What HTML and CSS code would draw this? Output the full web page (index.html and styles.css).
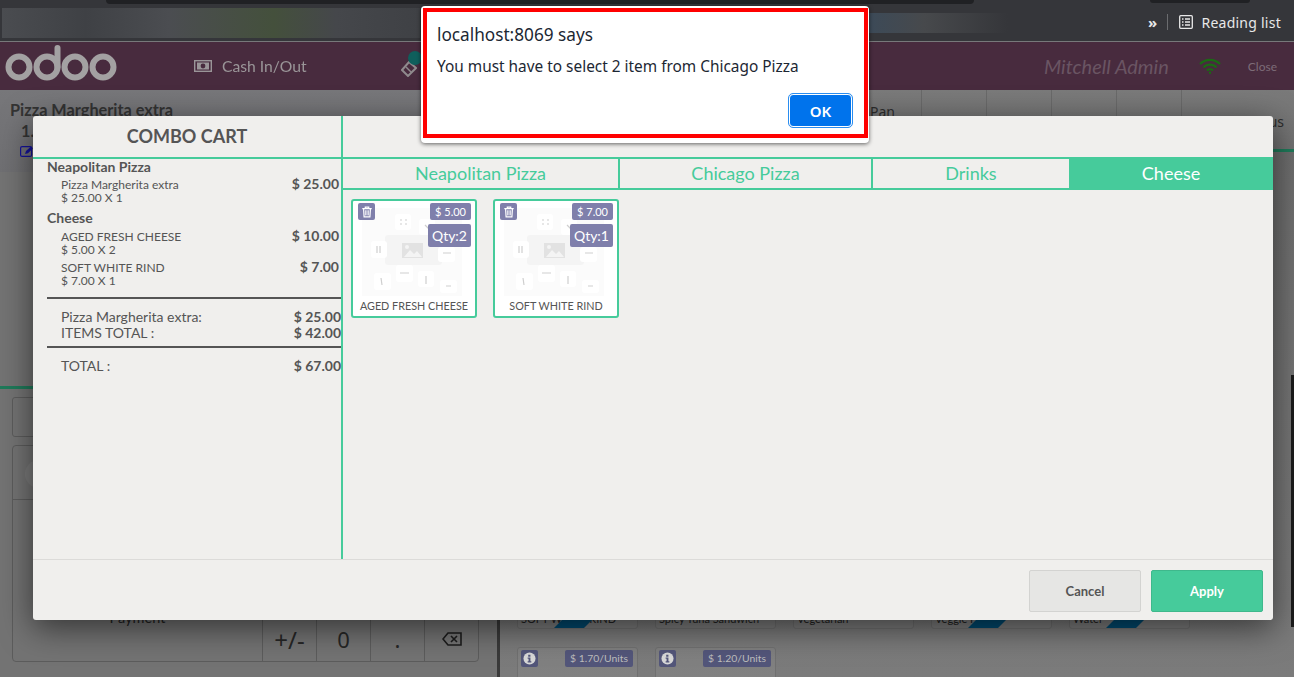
FILE: index.html
```html
<!DOCTYPE html>
<html lang="en">
<head>
    <meta charset="UTF-8">
    <title>Combo Cart</title>
    <link rel="stylesheet" href="styles.css">
</head>
<body>
<svg class="defs" width="0" height="0">
    <symbol id="placeholder" viewBox="0 0 100 88">
        <rect width="100" height="88" fill="#fbfbfb"/>
        <rect x="23" y="27" width="57" height="30" rx="3" fill="#f4f4f4"/>
        <path d="M40 35h21v15H40z" fill="#e2e2e2"/>
        <path d="M42 49l6-7 4 4 3-3 5 6z" fill="#f4f4f4"/>
        <circle cx="45" cy="39" r="2" fill="#f4f4f4"/>
        <rect x="33" y="6" width="16" height="16" rx="3" fill="#fff"/>
        <rect x="9" y="33" width="16" height="17" rx="3" fill="#fff"/>
        <rect x="57" y="11" width="16" height="16" rx="3" fill="#fff"/>
        <rect x="76" y="39" width="17" height="15" rx="3" fill="#fff"/>
        <rect x="34" y="57" width="17" height="17" rx="3" fill="#fff"/>
        <rect x="12" y="65" width="17" height="17" rx="3" fill="#fff"/>
        <rect x="56" y="63" width="16" height="16" rx="3" fill="#fff"/>
        <rect x="78" y="72" width="17" height="13" rx="3" fill="#fff"/>
        <path d="M38 12h2M43 12h2M38 16h2M43 16h2M15 38v7M18 38v7M38 65h9M19 70l1 7M64 68v8M84 78h5M81 45h8M63 17l4 4" stroke="#cfcfcf" stroke-width="1.200"/>
    </symbol>
    <symbol id="trash" viewBox="0 0 14 14">
        <path d="M1.500 3h11M5 3V1.400h4V3M3 3l.6 9.600h6.800L11 3" fill="none" stroke="#fff" stroke-width="1.400"/>
        <path d="M5.400 5v6M7 5v6M8.600 5v6" stroke="#fff" stroke-width="1"/>
    </symbol>
    <symbol id="info" viewBox="0 0 14 14">
        <circle cx="7" cy="7" r="6.500" fill="#d8d8d8"/>
        <path d="M5.600 3h2.400v2H5.600zM5 6h3v4h1v1.400H5V10h1V7.400H5z" fill="#53567a"/>
    </symbol>
</svg>

<div class="page">
    <!-- browser bar -->
    <div class="chrome">
        <div class="tab-strip"></div>
        <div class="tab-strip-right"></div>
        <div class="blur-left"></div>
        <div class="blur-right"></div>
        <div class="chrome-right">
            <span class="more">»</span>
            <span class="sep"></span>
            <svg class="list-icon" width="14" height="14" viewBox="0 0 14 14">
                <rect x=".7" y=".7" width="12.600" height="12.600" rx="1" fill="none" stroke="#e8e8e8" stroke-width="1.300"/>
                <path d="M3 4h1.500M6 4h5M3 7h1.500M6 7h5M3 10h1.500M6 10h5" stroke="#e8e8e8" stroke-width="1.300"/>
            </svg>
            <span>Reading list</span>
        </div>
    </div>

    <!-- pos header -->
    <div class="pos-header">
        <svg class="logo" width="112" height="36" viewBox="0 0 112 36">
            <g fill="none" stroke="#a3a1a2" stroke-width="6">
                <circle cx="14" cy="22" r="10.500"/>
                <circle cx="42" cy="22" r="10.500"/>
                <circle cx="70" cy="22" r="10.500"/>
                <circle cx="98" cy="22" r="10.500"/>
                <path d="M52.500 22V3" stroke-linecap="round"/>
            </g>
        </svg>
        <div class="cash">
            <svg width="18" height="12" viewBox="0 0 18 12">
                <rect x=".7" y=".7" width="16.600" height="10.600" fill="none" stroke="#a3a1a2" stroke-width="1.400"/>
                <rect x="3" y="2.500" width="12" height="7" fill="#a3a1a2"/>
                <circle cx="9" cy="6" r="2.400" fill="#482b3e"/>
            </svg>
            <span>Cash In/Out</span>
        </div>
        <div class="ticket">
            <svg width="16" height="16" viewBox="0 0 16 16">
                <path d="M1 9l7-8 7 6-8 8z" fill="none" stroke="#8f8a8d" stroke-width="2"/>
                <path d="M5 6l5 5" stroke="#8f8a8d" stroke-width="1.400"/>
            </svg>
            <span class="ticket-badge"></span>
        </div>
        <div class="header-right">
            <span class="cashier">Mitchell Admin</span>
            <svg class="wifi" width="22" height="16" viewBox="0 0 22 16">
                <g fill="none" stroke="#1b6a14" stroke-width="2.200">
                    <path d="M1 6a14 14 0 0 1 20 0"/>
                    <path d="M4.500 9.500a9 9 0 0 1 13 0"/>
                    <path d="M8 12.500a4.400 4.400 0 0 1 6 0"/>
                </g>
                <circle cx="11" cy="14.800" r="1.200" fill="#1b6a14"/>
            </svg>
            <span class="close-link">Close</span>
        </div>
    </div>

    <!-- pos screen under the dialog -->
    <div class="pos-screen">
        <div class="left-pane">
            <div class="order">
                <div class="order-name">Pizza Margherita extra</div>
                <div class="order-qty">1.</div>
                <svg class="edit" width="14" height="11" viewBox="0 0 14 11">
                    <rect x=".6" y=".6" width="11" height="9.800" rx="1.500" fill="none" stroke="#14129a" stroke-width="1.200"/>
                    <path d="M5 8l1-3 5-4.600 2 1.800-5 5z" fill="#14129a"/>
                </svg>
            </div>
            <div class="order-line"></div>
            <div class="customer-box"></div>
            <div class="pad-box">
                <div class="pad-top"><span class="pad-circle"></span></div>
                <div class="pad-main">
                    <div class="pay-col"><span class="pay-label">Payment</span></div>
                    <div class="keys">
                        <span class="key key-sign">+/-</span>
                        <span class="key">0</span>
                        <span class="key">.</span>
                        <span class="key">
                            <svg width="20" height="14" viewBox="0 0 20 14">
                                <path d="M6 1h13v12H6L1 7z" fill="none" stroke="#1c1c1c" stroke-width="1.600"/>
                                <path d="M9 4l6 6M15 4l-6 6" stroke="#1c1c1c" stroke-width="1.600"/>
                            </svg>
                        </span>
                    </div>
                </div>
            </div>
        </div>
        <div class="right-pane">
            <div class="categories">
                <span class="cat cat-pan">Pan</span>
                <span class="cat">Style</span>
                <span class="cat">Pasta</span>
                <span class="cat">Drinks</span>
                <span class="cat">Foods</span>
                <span class="cat">Miscellaneous</span>
            </div>
            <div class="products">
                <div class="tile"><span class="tile-name">SOFT WHITE RIND</span><span class="ribbon"></span></div>
                <div class="tile"><span class="tile-name">Spicy Tuna Sandwich</span></div>
                <div class="tile"><span class="tile-name">Vegetarian</span></div>
                <div class="tile"><span class="tile-name">Veggie F</span><span class="ribbon"></span></div>
                <div class="tile"><span class="tile-name">Water</span><span class="ribbon"></span></div>
                <div class="tile tile-next">
                    <svg class="tile-info"><use href="#info" x="2" y="2" width="13" height="13"/></svg>
                    <span class="tile-price">$ 1.70/Units</span>
                </div>
                <div class="tile tile-next">
                    <svg class="tile-info"><use href="#info" x="2" y="2" width="13" height="13"/></svg>
                    <span class="tile-price">$ 1.20/Units</span>
                </div>
            </div>
        </div>
        <div class="scrollbar"></div>
    </div>

    <!-- combo dialog -->
    <div class="modal">
        <div class="modal-body">
            <div class="cart">
                <h2 class="cart-title">COMBO CART</h2>
                <div class="cart-lines">
                    <div class="group-name">Neapolitan Pizza</div>
                    <div class="line">
                        <div class="line-text">Pizza Margherita extra<br>$ 25.00 X 1</div>
                        <div class="line-price">$ 25.00</div>
                    </div>
                    <div class="group-name group-second">Cheese</div>
                    <div class="line line-after-second">
                        <div class="line-text">AGED FRESH CHEESE<br>$ 5.00 X 2</div>
                        <div class="line-price">$ 10.00</div>
                    </div>
                    <div class="line line-next">
                        <div class="line-text">SOFT WHITE RIND<br>$ 7.00 X 1</div>
                        <div class="line-price">$ 7.00</div>
                    </div>
                </div>
                <div class="totals">
                    <div class="total-row"><span>Pizza Margherita extra:</span><b>$ 25.00</b></div>
                    <div class="total-row"><span>ITEMS TOTAL :</span><b>$ 42.00</b></div>
                </div>
                <div class="totals totals-last">
                    <div class="total-row"><span>TOTAL :</span><b>$ 67.00</b></div>
                </div>
            </div>
            <div class="picker">
                <div class="picker-top"></div>
                <div class="tabs">
                    <div class="tab tab-1">Neapolitan Pizza</div>
                    <div class="tab tab-2">Chicago Pizza</div>
                    <div class="tab tab-3">Drinks</div>
                    <div class="tab tab-active">Cheese</div>
                </div>
                <div class="cards">
                    <div class="card">
                        <svg class="card-img"><use href="#placeholder"/></svg>
                        <span class="card-del"><svg width="12" height="12"><use href="#trash"/></svg></span>
                        <span class="card-price">$ 5.00</span>
                        <span class="card-qty">Qty:2</span>
                        <div class="card-name">AGED FRESH CHEESE</div>
                    </div>
                    <div class="card">
                        <svg class="card-img"><use href="#placeholder"/></svg>
                        <span class="card-del"><svg width="12" height="12"><use href="#trash"/></svg></span>
                        <span class="card-price">$ 7.00</span>
                        <span class="card-qty">Qty:1</span>
                        <div class="card-name">SOFT WHITE RIND</div>
                    </div>
                </div>
            </div>
        </div>
        <div class="modal-footer">
            <button class="btn btn-cancel">Cancel</button>
            <button class="btn btn-apply">Apply</button>
        </div>
    </div>

    <!-- browser alert -->
    <div class="alert">
        <div class="alert-inner">
            <div class="alert-title">localhost:8069 says</div>
            <div class="alert-msg">You must have to select 2 item from Chicago Pizza</div>
            <div class="alert-actions"><button class="alert-ok">OK</button></div>
        </div>
    </div>
</div>
</body>
</html>
```

FILE: styles.css
```css
/* Page */
body {
    margin: 0;
    font-family: Lato, "Noto Sans", sans-serif;
    background: #737373;
}

.defs {
    position: absolute;
}

.page {
    position: relative;
    width: 1294px;
    height: 677px;
    overflow: hidden;
}

/* Browser bar */
.chrome {
    position: relative;
    height: 41px;
    background: #35363a;
    border-bottom: 1px solid #77787a;
}

.tab-strip {
    position: absolute;
    left: 106px;
    top: 0;
    width: 868px;
    height: 4px;
    background: #202124;
    border-radius: 0 0 8px 8px;
}

.tab-strip-right {
    position: absolute;
    left: 1150px;
    top: 0;
    width: 100px;
    height: 3px;
    background: #202124;
    border-radius: 0 0 6px 6px;
}

.blur-left {
    position: absolute;
    left: 2px;
    top: 8px;
    width: 418px;
    height: 30px;
    background: linear-gradient(90deg, #4a4c50, #3f4145 20%, #4b4d51 40%, #44503c 65%, #45474b 80%, #3f4145);
}

.blur-right {
    position: absolute;
    left: 868px;
    top: 13px;
    width: 140px;
    height: 20px;
    background: linear-gradient(90deg, #3c4a58, #47494c 40%, #35363a);
}

.chrome-right {
    position: absolute;
    right: 13px;
    top: 0;
    height: 44px;
    display: flex;
    align-items: center;
    color: #e8e8e8;
    font-family: "Noto Sans", sans-serif;
    font-size: 14px;
    letter-spacing: .25px;
}

.more {
    font-size: 15px;
    font-weight: bold;
}

.sep {
    width: 1px;
    height: 16px;
    background: #6b6c6f;
    margin: 0 11px 0 10px;
}

.list-icon {
    margin-right: 8px;
}

/* POS header */
.pos-header {
    position: relative;
    height: 48px;
    background: #482b3e;
    display: flex;
    align-items: center;
    color: #a3a1a2;
}

.logo {
    position: absolute;
    left: 5px;
    top: 3px;
}

.cash {
    margin-left: 194px;
    display: flex;
    align-items: center;
    gap: 10px;
    font-size: 15.700px;
    line-height: 20px;
    margin-top: -1px;
    opacity: .9;
}

.ticket {
    position: relative;
    margin-left: 94px;
    padding-top: 8px;
}

.ticket-badge {
    position: absolute;
    left: 7px;
    top: -2px;
    width: 14px;
    height: 14px;
    border-radius: 50%;
    background: #0f5f5c;
}

.header-right {
    margin-left: auto;
    display: flex;
    align-items: center;
}

.cashier {
    font-size: 20px;
    font-style: italic;
    color: #6a5563;
}

.wifi {
    margin-left: 30px;
    margin-right: 27px;
}

.close-link {
    font-size: 12px;
    color: #7d6c78;
    margin-right: 17px;
}

/* POS screen, dimmed under the dialog */
.pos-screen {
    position: relative;
    display: flex;
    height: 587px;
    background: #737373;
}

.left-pane {
    width: 497px;
    flex: none;
    display: flex;
    flex-direction: column;
    border-right: 3px solid #3a3a3a;
}

.order {
    height: 82px;
    background: linear-gradient(#77777a, #6f6f72);
    padding: 11px 10px 0;
    box-sizing: border-box;
    color: #333;
    font-weight: bold;
    font-size: 16.300px;
    line-height: 18px;
}

.order-qty {
    margin: 3px 0 0 11px;
}

.edit {
    display: block;
    margin: 6px 0 0 10px;
}

.order-line {
    height: 3px;
    margin-top: 214px;
    background: #1f7a5a;
}

.customer-box {
    height: 38px;
    margin: 8px 0 0 12px;
    width: 300px;
    border: 1px solid #5c5c5c;
    border-radius: 3px;
}

.pad-box {
    width: 465px;
    height: 215px;
    margin: 8px 0 0 12px;
    border: 1px solid #5c5c5c;
    border-radius: 4px;
    display: flex;
    flex-direction: column;
}

.pad-top {
    height: 54px;
    border-bottom: 1px solid #5c5c5c;
    flex: none;
    padding: 14px 0 0 12px;
    box-sizing: border-box;
}

.pad-circle {
    display: block;
    width: 20px;
    height: 28px;
    border-radius: 14px 0 0 14px;
    background: #7b7b7b;
}

.pad-main {
    flex: 1;
    display: flex;
    justify-content: flex-end;
    align-items: flex-end;
}

.pay-col {
    flex: 1;
    align-self: stretch;
    display: flex;
    justify-content: center;
    padding-top: 110px;
    box-sizing: border-box;
}

.pay-label {
    font-size: 14.500px;
    line-height: 16px;
    height: 16px;
    color: #222;
}

.keys {
    display: flex;
    height: 44px;
}

.key {
    width: 53px;
    border-left: 1px solid #5c5c5c;
    display: flex;
    align-items: center;
    justify-content: center;
    font-family: "Noto Sans", sans-serif;
    font-size: 22px;
    color: #262626;
}

.key-sign {
    font-size: 24px;
}

.right-pane {
    flex: 1;
    min-width: 0;
    background: linear-gradient(#6d6d6d 10%, #7b7b7b);
}

.categories {
    height: 59px;
    border-bottom: 3px solid #1f7a5a;
    background: linear-gradient(#7a7a7a, #717171);
    display: flex;
    color: #2d2d2d;
    font-family: "Noto Sans", sans-serif;
    font-size: 14px;
}

.cat {
    width: 65px;
    border-left: 1px solid #696969;
    flex: none;
    text-align: center;
    padding-top: 22px;
    box-sizing: border-box;
    height: 59px;
}

.cat-pan {
    width: 421px;
    border-left: 0;
    text-align: right;
    padding: 12px 26px 0 0;
}

.cat:last-child {
    width: 112px;
}

.products {
    display: flex;
    flex-wrap: wrap;
    gap: 18px 17px;
    align-content: flex-start;
    padding: 358px 0 0 17px;
}

.tile {
    position: relative;
    width: 121px;
    height: 119px;
    box-sizing: border-box;
    background: #7d7d7d;
    border: 1px solid #707070;
    border-radius: 3px;
    overflow: hidden;
    color: #222;
    font-size: 11px;
    flex: none;
}

.tile-name {
    position: absolute;
    left: 3px;
    bottom: 3px;
}

.ribbon {
    position: absolute;
    left: 44px;
    bottom: -2px;
    width: 30px;
    height: 20px;
    background: #004a70;
    transform: skewX(-45deg);
}

.tile-next {
    background: linear-gradient(#7f7f7f, #878787);
}

.tile-info {
    position: absolute;
    left: 3px;
    top: 2px;
    width: 17px;
    height: 17px;
    background: #53567a;
    border-radius: 2px;
}

.tile-price {
    position: absolute;
    right: 4px;
    top: 2px;
    height: 17px;
    line-height: 17px;
    padding: 0 5px;
    background: #53567a;
    border-radius: 2px;
    color: #bdbdbd;
    font-size: 10.400px;
}

.scrollbar {
    position: absolute;
    right: 0;
    top: 285px;
    width: 3px;
    height: 252px;
    background: #1b1b1b;
}

/* Dialog */
.modal {
    position: absolute;
    left: 33px;
    top: 116px;
    width: 1240px;
    height: 504px;
    background: #f0efed;
    border-radius: 3px;
    box-shadow: 0 8px 32px rgba(0, 0, 0, .55);
    display: flex;
    flex-direction: column;
    color: #555;
}

.modal-body {
    flex: 1;
    display: flex;
    min-height: 0;
}

.cart {
    width: 308px;
    flex: none;
    border-right: 2px solid #46cb9b;
}

.cart-title {
    margin: 0;
    height: 43px;
    line-height: 41px;
    box-sizing: border-box;
    text-align: center;
    font-size: 18px;
    font-weight: bold;
    color: #555;
    border-bottom: 2px solid #46cb9b;
}

.cart-lines {
    padding: 0 2px 0 14px;
    margin-top: -1px;
}

.group-name {
    font-size: 14px;
    font-weight: bold;
    line-height: 17px;
}

.group-second {
    margin-top: 5px;
}

.line {
    display: flex;
    justify-content: space-between;
    padding-left: 14px;
    margin-top: 3px;
}

.line-after-second {
    margin-top: 4px;
}

.line-next {
    margin-top: 5px;
}

.line-text {
    font-size: 12px;
    line-height: 13px;
}

.line-price {
    font-size: 14px;
    font-weight: bold;
    line-height: 18px;
    margin-top: -3px;
}

.totals {
    margin: 10px 0 0 14px;
    border-top: 2px solid #555;
    padding: 10px 0 0 14px;
    font-size: 14px;
    line-height: 16px;
}

.totals-last {
    margin-top: 5px;
    padding-top: 10px;
}

.total-row {
    display: flex;
    justify-content: space-between;
}

.picker {
    flex: 1;
    min-width: 0;
    display: flex;
    flex-direction: column;
}

.picker-top {
    height: 41px;
    flex: none;
}

.tabs {
    height: 33px;
    flex: none;
    display: flex;
    box-sizing: border-box;
    border-top: 2px solid #46cb9b;
    border-bottom: 2px solid #46cb9b;
    font-size: 18px;
    color: #46cb9b;
}

.tab {
    display: flex;
    align-items: center;
    justify-content: center;
    box-sizing: border-box;
    border-right: 2px solid #46cb9b;
    padding-bottom: 2px;
}

.tab-1 {
    width: 277px;
}

.tab-2 {
    width: 253px;
}

.tab-3 {
    width: 196px;
    border-right: 0;
}

.tab-active {
    flex: 1;
    background: #46cb9b;
    color: #fff;
    border-right: 0;
}

.cards {
    display: flex;
    gap: 16px;
    padding: 9px 0 0 8px;
}

.card {
    position: relative;
    width: 126px;
    height: 119px;
    box-sizing: border-box;
    background: #fff;
    border: 2px solid #46cb9b;
    border-radius: 3px;
}

.card-img {
    display: block;
    width: 100px;
    height: 88px;
    margin: 7px 0 0 9px;
    filter: blur(.6px);
}

.card-del {
    position: absolute;
    left: 5px;
    top: 2px;
    width: 17px;
    height: 17px;
    background: #7f7fab;
    border-radius: 2px;
    display: flex;
    align-items: center;
    justify-content: center;
}

.card-price {
    position: absolute;
    right: 4px;
    top: 2px;
    height: 17px;
    line-height: 17px;
    padding: 0 5px;
    background: #7f7fab;
    border-radius: 2px;
    color: #fff;
    font-size: 11px;
}

.card-qty {
    position: absolute;
    right: 4px;
    top: 23px;
    height: 23px;
    line-height: 23px;
    padding: 0 4px;
    background: #7f7fab;
    border-radius: 2px;
    color: #fff;
    font-size: 14px;
}

.card-name {
    margin-top: 3px;
    text-align: center;
    font-size: 10.800px;
    line-height: 14px;
    color: #555;
}

.modal-footer {
    height: 61px;
    flex: none;
    box-sizing: border-box;
    border-top: 1px solid #dcdbd9;
    display: flex;
    justify-content: flex-end;
    gap: 10px;
    padding: 10px 10px 0 0;
}

.btn {
    width: 112px;
    height: 42px;
    box-sizing: border-box;
    border-radius: 2px;
    font-family: Lato, sans-serif;
    font-size: 13px;
    font-weight: bold;
}

.btn-cancel {
    background: #e6e6e4;
    border: 1px solid #d3d3d1;
    color: #555;
}

.btn-apply {
    background: #46cb9b;
    border: 1px solid #3fb88c;
    color: #fff;
}

/* Browser alert */
.alert {
    position: absolute;
    left: 421px;
    top: 6px;
    width: 448px;
    height: 137px;
    box-sizing: border-box;
    padding: 2px 1px 5px 2px;
    background: #fff;
    border-radius: 4px;
    box-shadow: 0 1px 4px rgba(0, 0, 0, .6);
}

.alert-inner {
    height: 100%;
    box-sizing: border-box;
    border: 4px solid #f00;
    padding: 11px 12px 0 10px;
    font-family: "Noto Sans", sans-serif;
    color: #1c2733;
}

.alert-title {
    font-size: 17.200px;
    line-height: 24px;
}

.alert-msg {
    margin-top: 8px;
    font-size: 15.400px;
    line-height: 24px;
}

.alert-actions {
    display: flex;
    justify-content: flex-end;
    margin-top: 15px;
}

.alert-ok {
    width: 63px;
    height: 33px;
    box-sizing: border-box;
    background: #0073ec;
    color: #fff;
    border: 1px solid #fff;
    border-radius: 4px;
    outline: 1px solid #2a8df0;
    font-family: "Noto Sans", sans-serif;
    font-size: 15px;
    font-weight: 600;
}
```
